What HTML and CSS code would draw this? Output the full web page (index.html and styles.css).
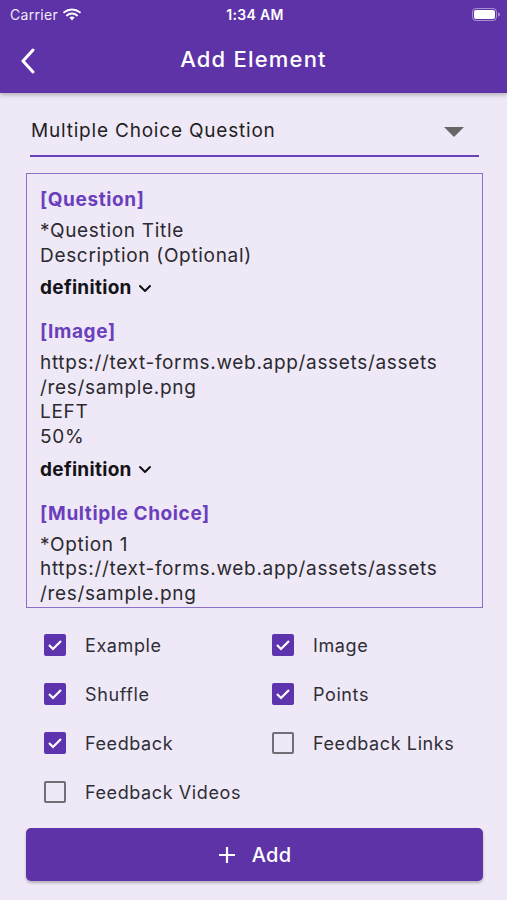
FILE: index.html
```html
<!DOCTYPE html>
<html>
<head>
<meta charset="utf-8">
<link rel="stylesheet" href="styles.css">
</head>
<body>
<div class="app">
  <header class="topbar">
    <div class="status">
      <div class="status-left">Carrier
        <svg class="wifi" width="18" height="13" viewBox="0 0 18 13"><path d="M9 12.5l2.6-3.1a4.2 4.2 0 0 0-5.2 0z" fill="#fff"/><path d="M3.9 7.4a7.8 7.8 0 0 1 10.2 0" stroke="#fff" stroke-width="2" fill="none" stroke-linecap="round"/><path d="M1.2 4.3a12 12 0 0 1 15.6 0" stroke="#fff" stroke-width="2" fill="none" stroke-linecap="round"/></svg>
      </div>
      <div class="status-time">1:34 AM</div>
      <div class="status-right">
        <svg width="28" height="13" viewBox="0 0 28 13"><rect x="0.5" y="0.5" width="24" height="12" rx="3.5" fill="none" stroke="rgba(255,255,255,0.45)"/><rect x="2" y="2" width="21" height="9" rx="2" fill="#fff"/><path d="M26 4.5v4a2 2 0 0 0 0-4z" fill="rgba(255,255,255,0.45)"/></svg>
      </div>
    </div>
    <div class="nav">
      <svg class="back" width="16" height="26" viewBox="0 0 16 26"><path d="M13 2L3 13l10 11" stroke="#fff" stroke-width="3" fill="none" stroke-linecap="round" stroke-linejoin="round"/></svg>
      <div class="title">Add Element</div>
    </div>
  </header>

  <main class="content">
    <div class="dropdown">
      <span class="dd-text">Multiple Choice Question</span>
      <svg class="dd-arrow" width="20" height="10" viewBox="0 0 20 10"><path d="M0 0h20L10 10z" fill="#666"/></svg>
    </div>

    <div class="preview">
      <div class="tag">[Question]</div>
      <div class="line">*Question Title</div>
      <div class="line">Description (Optional)</div>
      <div class="def">definition <svg width="14" height="9" viewBox="0 0 14 9"><path d="M2 2l5 5 5-5" stroke="#111" stroke-width="2" fill="none" stroke-linecap="round" stroke-linejoin="round"/></svg></div>

      <div class="tag gap">[Image]</div>
      <div class="line">https://text-forms.web.app/assets/assets</div>
      <div class="line">/res/sample.png</div>
      <div class="line">LEFT</div>
      <div class="line">50%</div>
      <div class="def">definition <svg width="14" height="9" viewBox="0 0 14 9"><path d="M2 2l5 5 5-5" stroke="#111" stroke-width="2" fill="none" stroke-linecap="round" stroke-linejoin="round"/></svg></div>

      <div class="tag gap">[Multiple Choice]</div>
      <div class="line">*Option 1</div>
      <div class="line">https://text-forms.web.app/assets/assets</div>
      <div class="line">/res/sample.png</div>
    </div>

    <div class="options">
      <label class="opt"><span class="cb on"><svg width="16" height="12" viewBox="0 0 16 12"><path d="M2 6l4 4 8-8" stroke="#fff" stroke-width="2.2" fill="none"/></svg></span>Example</label>
      <label class="opt"><span class="cb on"><svg width="16" height="12" viewBox="0 0 16 12"><path d="M2 6l4 4 8-8" stroke="#fff" stroke-width="2.2" fill="none"/></svg></span>Image</label>
      <label class="opt"><span class="cb on"><svg width="16" height="12" viewBox="0 0 16 12"><path d="M2 6l4 4 8-8" stroke="#fff" stroke-width="2.2" fill="none"/></svg></span>Shuffle</label>
      <label class="opt"><span class="cb on"><svg width="16" height="12" viewBox="0 0 16 12"><path d="M2 6l4 4 8-8" stroke="#fff" stroke-width="2.2" fill="none"/></svg></span>Points</label>
      <label class="opt"><span class="cb on"><svg width="16" height="12" viewBox="0 0 16 12"><path d="M2 6l4 4 8-8" stroke="#fff" stroke-width="2.2" fill="none"/></svg></span>Feedback</label>
      <label class="opt"><span class="cb"></span>Feedback Links</label>
      <label class="opt"><span class="cb"></span>Feedback Videos</label>
    </div>

    <button class="add-btn"><svg width="18" height="18" viewBox="0 0 18 18"><path d="M9 1v16M1 9h16" stroke="#fff" stroke-width="2.2"/></svg><span>Add</span></button>
  </main>
</div>
</body>
</html>
```
FILE: styles.css
```css
* { box-sizing: border-box; }
html, body { margin: 0; padding: 0; }
body {
  width: 507px;
  height: 900px;
  overflow: hidden;
  background: #efe8f6;
  font-family: Inter, "Noto Sans", sans-serif;
  color: #1f1f24;
}
.app { display: flex; flex-direction: column; height: 900px; }
.topbar {
  background: #5f33a8;
  color: #fff;
  height: 93px;
  box-shadow: 0 2px 4px rgba(0,0,0,0.25);
  position: relative;
  z-index: 2;
}
.status {
  height: 28px;
  display: flex;
  align-items: center;
  justify-content: space-between;
  padding: 0 7px 0 10px;
  font-size: 14px;
}
.status-left { display: flex; align-items: center; gap: 5px; width: 120px; color: rgba(255,255,255,0.92); letter-spacing: 0.3px; }
.status-time { font-weight: 600; font-size: 14px; letter-spacing: 0.3px; }
.status-right { width: 120px; display: flex; justify-content: flex-end; }
.nav {
  height: 65px;
  display: flex;
  align-items: center;
  position: relative;
  padding-left: 20px;
}
.back { display: block; }
.title {
  position: absolute;
  left: 0; right: 0;
  text-align: center;
  font-size: 22px;
  font-weight: 500;
  letter-spacing: 1.2px;
  top: 18px;
}
.content { padding: 0 24px 0 26px; display: flex; flex-direction: column; }
.dropdown {
  margin: 22px 4px 0 4px;
  height: 42px;
  border-bottom: 2px solid #6a40b8;
  display: flex;
  align-items: flex-start;
  justify-content: space-between;
  padding: 4px 15px 0 1px;
}
.dd-text { font-size: 19px; color: #1f1f24; letter-spacing: 0.8px; }
.dd-arrow { margin-top: 8px; }
.preview {
  margin-top: 16px;
  height: 435px;
  border: 1.5px solid #8a70c6;
  padding: 12px 12px 0 13px;
  overflow: hidden;
}
.tag { color: #6a3fbd; font-weight: 700; font-size: 19px; line-height: 28px; letter-spacing: 0.6px; }
.tag.gap { margin-top: 16px; }
.line { font-size: 19px; line-height: 24.6px; color: #2a2a30; letter-spacing: 0.68px; }
.tag + .line { margin-top: 5px; }
.def { font-weight: 700; font-size: 19px; line-height: 28px; margin-top: 6px; color: #141418; display: flex; align-items: center; gap: 6px; letter-spacing: 0.3px; }
.options {
  display: grid;
  grid-template-columns: 228px 1fr;
  row-gap: 27px;
  margin: 26px 0 0 18px;
}
.opt { display: flex; align-items: center; gap: 19px; font-size: 18px; color: #2e2e36; height: 22px; letter-spacing: 0.6px; }
.cb {
  width: 22px; height: 22px;
  border: 2px solid #6f6f74;
  border-radius: 2px;
  display: flex; align-items: center; justify-content: center;
  flex: none;
}
.cb.on { background: #5e34ae; border-color: #5e34ae; }
.add-btn {
  margin-top: 25px;
  height: 53px;
  background: #5f33a8;
  border: none;
  border-radius: 5px;
  color: #fff;
  font-family: inherit;
  font-size: 20px;
  font-weight: 500;
  letter-spacing: 0.3px;
  display: flex;
  align-items: center;
  justify-content: center;
  gap: 16px;
  box-shadow: 0 2px 3px rgba(0,0,0,0.25);
}
```
